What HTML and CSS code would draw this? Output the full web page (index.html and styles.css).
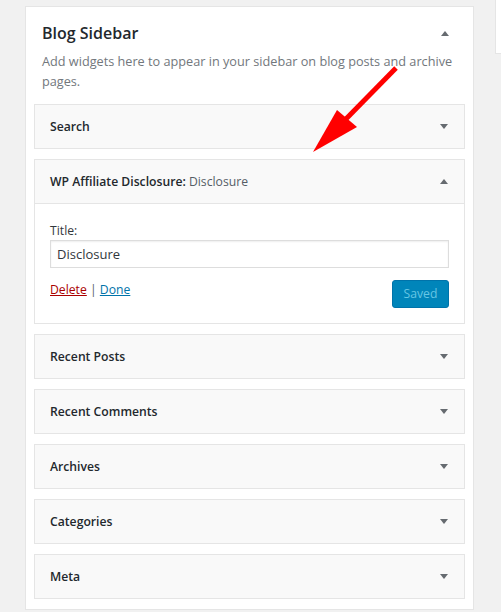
FILE: index.html
```html
<!DOCTYPE html>
<html>
<head>
<meta charset="utf-8">
<link rel="stylesheet" href="styles.css">
</head>
<body>
<div class="columns">
  <div class="panel">
    <div class="sidebar-head">
      <div class="head-row">
        <h2 class="sidebar-title">Blog Sidebar</h2>
        <span class="tri tri-up"></span>
      </div>
      <p class="sidebar-desc">Add widgets here to appear in your sidebar on blog posts and archive pages.</p>
    </div>
    <div class="widgets">
      <div class="widget">
        <div class="widget-top"><span class="widget-title">Search</span><span class="tri tri-down"></span></div>
      </div>
      <div class="widget open">
        <div class="widget-top"><span class="widget-title">WP Affiliate Disclosure: <span class="in-title">Disclosure</span></span><span class="tri tri-up"></span></div>
        <div class="widget-inside">
          <label class="field-label">Title:</label>
          <div class="field-input">Disclosure</div>
          <div class="widget-actions">
            <div class="links"><a class="del">Delete</a><span class="sep"> | </span><a class="done">Done</a></div>
            <span class="btn-saved">Saved</span>
          </div>
        </div>
      </div>
      <div class="widget">
        <div class="widget-top"><span class="widget-title">Recent Posts</span><span class="tri tri-down"></span></div>
      </div>
      <div class="widget">
        <div class="widget-top"><span class="widget-title">Recent Comments</span><span class="tri tri-down"></span></div>
      </div>
      <div class="widget">
        <div class="widget-top"><span class="widget-title">Archives</span><span class="tri tri-down"></span></div>
      </div>
      <div class="widget">
        <div class="widget-top"><span class="widget-title">Categories</span><span class="tri tri-down"></span></div>
      </div>
      <div class="widget">
        <div class="widget-top"><span class="widget-title">Meta</span><span class="tri tri-down"></span></div>
      </div>
    </div>
  </div>
  <div class="side-box"></div>
</div>
<svg class="annot" width="501" height="612" viewBox="0 0 501 612">
  <line x1="396" y1="68" x2="343" y2="122" stroke="#ff0000" stroke-width="5"/>
  <polygon points="337,110 357,127 313,152" fill="#ff0000"/>
</svg>
</body>
</html>
```
FILE: styles.css
```css
* { box-sizing: border-box; }
html, body { margin: 0; padding: 0; }
body {
  background: #f1f1f1;
  font-family: "Open Sans", "Noto Sans", sans-serif;
  color: #23282d;
  width: 501px;
  height: 612px;
  overflow: hidden;
  position: relative;
}
.columns {
  display: flex;
  align-items: flex-start;
  padding-left: 25px;
  gap: 21px;
}
.panel {
  flex-shrink: 0;
  margin-top: 6px;
  width: 449px;
  background: #fff;
  border: 1px solid #e5e5e5;
  padding: 0 8px 10px;
}
.side-box {
  flex-shrink: 0;
  width: 6px;
  height: 54px;
  background: #fff;
  border: 1px solid #e5e5e5;
  border-top: none;
  border-right: none;
}
.sidebar-head { padding: 15px 8px 0; }
.head-row {
  display: flex;
  align-items: center;
  justify-content: space-between;
  padding-right: 8px;
}
.sidebar-title {
  margin: 0;
  font-size: 16px;
  line-height: 22px;
  font-weight: 600;
}
.sidebar-desc {
  margin: 7px 0 13px;
  font-size: 12.7px;
  line-height: 20px;
  color: #72777c;
}
.widgets { display: flex; flex-direction: column; gap: 10px; }
.widget {
  border: 1px solid #e5e5e5;
  background: #f9f9f9;
}
.widget-top {
  height: 43px;
  display: flex;
  align-items: center;
  justify-content: space-between;
  padding: 0 16px 0 15px;
}
.widget-title {
  font-size: 12.2px;
  font-weight: 600;
  color: #23282d;
}
.in-title { font-weight: 400; color: #555d66; }
.tri { width: 0; height: 0; border-left: 4.5px solid transparent; border-right: 4.5px solid transparent; }
.tri-down { border-top: 5px solid #666b70; }
.tri-up { border-bottom: 5px solid #666b70; }
.widget-inside {
  background: #fff;
  border-top: 1px solid #e5e5e5;
  padding: 17px 15px 15px;
  display: flex;
  flex-direction: column;
}
.field-label {
  font-size: 12.2px;
  line-height: 19px;
  color: #32373c;
}
.field-input {
  height: 28px;
  border: 1px solid #ddd;
  box-shadow: inset 0 1px 2px rgba(0,0,0,0.07);
  background: #fff;
  padding: 0 6px;
  font-size: 13px;
  line-height: 26px;
  color: #32373c;
}
.widget-actions {
  margin-top: 12px;
  display: flex;
  justify-content: space-between;
  align-items: flex-start;
}
.links { font-size: 12.2px; line-height: 20px; color: #555d66; }
.del { color: #a00; text-decoration: underline; }
.done { color: #0073aa; text-decoration: underline; }
.btn-saved {
  width: 57px;
  height: 28px;
  background: #0085ba;
  border: 1px solid #0073aa;
  border-radius: 3px;
  color: #66c6e4;
  font-size: 12.2px;
  line-height: 26px;
  text-align: center;
}
.annot { position: absolute; top: 0; left: 0; pointer-events: none; }
```
